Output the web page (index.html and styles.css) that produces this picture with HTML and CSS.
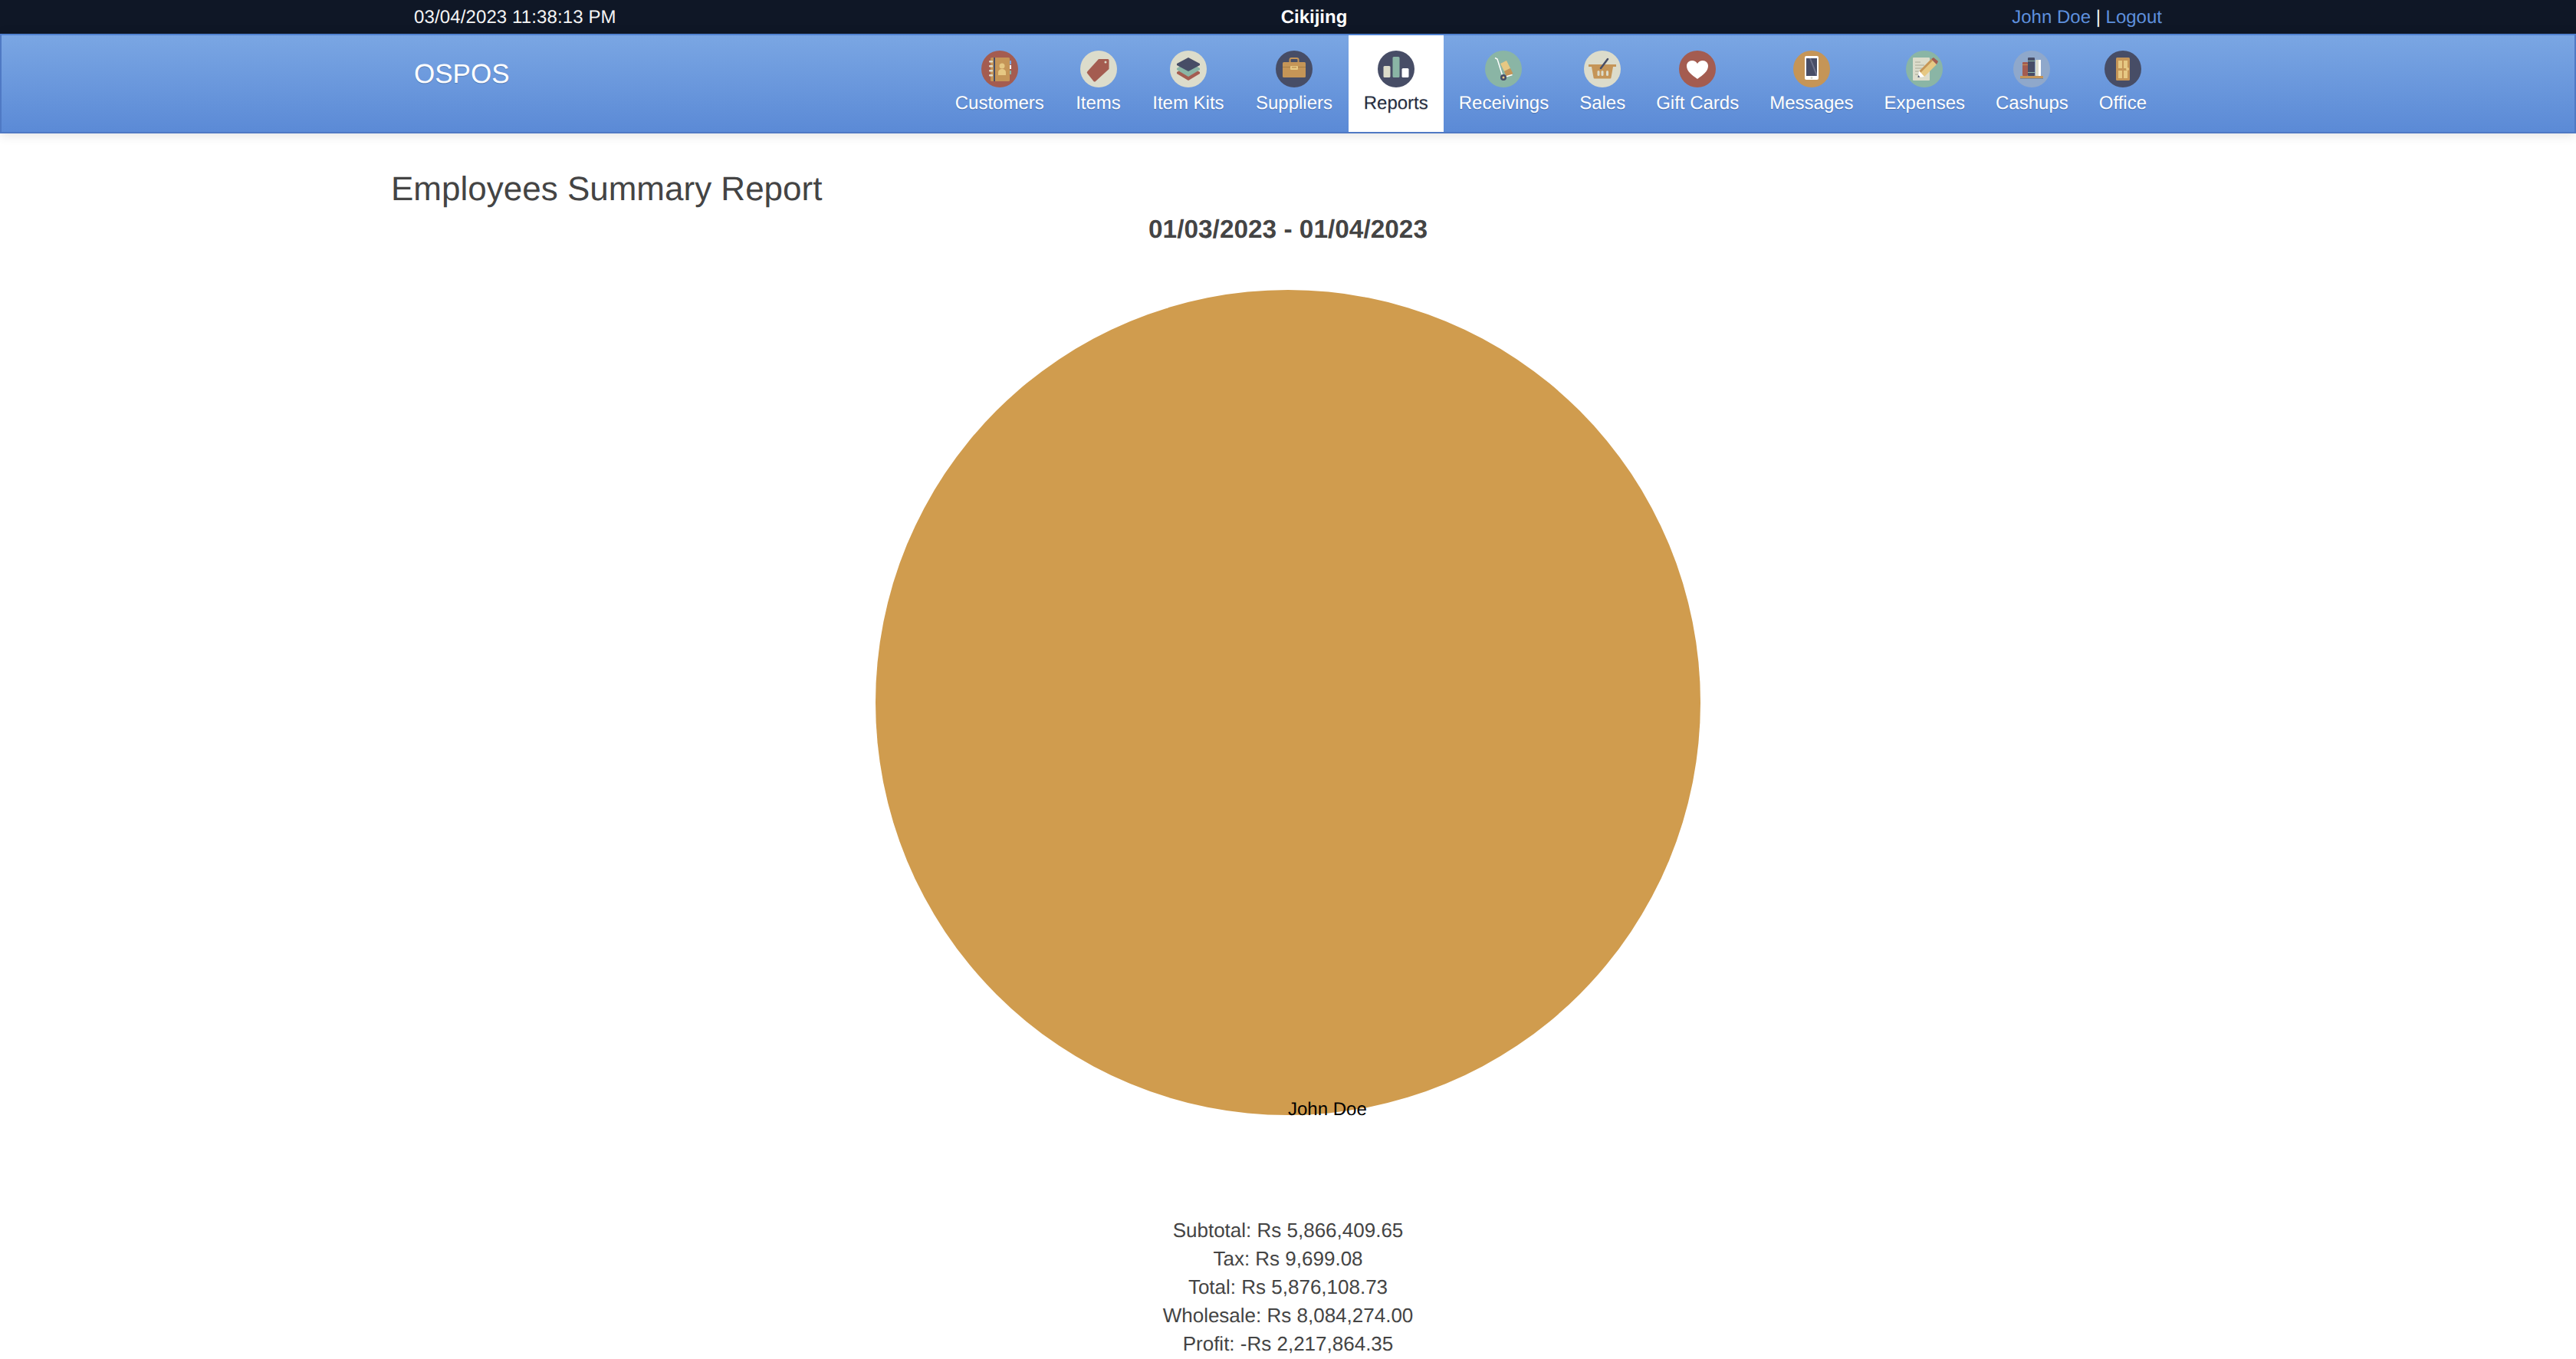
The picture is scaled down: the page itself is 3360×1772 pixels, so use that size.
FILE: index.html
```html
<!DOCTYPE html>
<html lang="en">
<head>
    <meta charset="UTF-8">
    <title>OSPOS - Employees Summary Report</title>
    <link rel="stylesheet" href="styles.css">
</head>
<body>
    <div class="topbar">
        <div class="topbar-inner">
            <div class="clock">03/04/2023 11:38:13 PM</div>
            <div class="company">Cikijing</div>
            <div><a href="#">John Doe</a> | <a href="#">Logout</a></div>
        </div>
    </div>

    <div class="navbar">
        <div class="navbar-inner">
            <a class="brand" href="#">OSPOS</a>
            <nav class="menu">
                <a class="menu-item" href="#">
                    <svg class="icon" viewBox="0 0 48 48">
                        <circle cx="24" cy="24" r="24" fill="#a45c50"/>
                        <rect x="12" y="9" width="25" height="31" rx="1.5" fill="#c59557"/>
                        <rect x="16" y="9" width="2" height="31" fill="#474d66"/>
                        <rect x="10" y="13" width="5" height="2.5" rx="1" fill="#dcdccb"/>
                        <rect x="10" y="19" width="5" height="2.5" rx="1" fill="#dcdccb"/>
                        <rect x="10" y="25" width="5" height="2.5" rx="1" fill="#dcdccb"/>
                        <rect x="10" y="31" width="5" height="2.5" rx="1" fill="#dcdccb"/>
                        <rect x="37" y="13" width="2" height="5" fill="#7aa6e3"/>
                        <rect x="37" y="19" width="2" height="5" fill="#ffffff"/>
                        <rect x="37" y="26" width="2" height="5" fill="#8ab5a5"/>
                        <circle cx="27" cy="20" r="3.5" fill="#e6c883"/>
                        <path d="M22 32v-3.5c0-3 2-4.5 5-4.5s5 1.500 5 4.500V32z" fill="#e6c883"/>
                    </svg>
                    <span>Customers</span>
                </a>
                <a class="menu-item" href="#">
                    <svg class="icon" viewBox="0 0 48 48">
                        <circle cx="24" cy="24" r="24" fill="#dcdccb"/>
                        <path d="M24 11h12a1.500 1.500 0 0 1 1.500 1.500V24L20 40a2 2 0 0 1-2.500 0L9.500 30a2 2 0 0 1 0-3z" fill="#a45c50"/>
                        <circle cx="33" cy="15" r="1.500" fill="#dcdccb"/>
                    </svg>
                    <span>Items</span>
                </a>
                <a class="menu-item" href="#">
                    <svg class="icon" viewBox="0 0 48 48">
                        <circle cx="24" cy="24" r="24" fill="#dcdccb"/>
                        <path d="M24 19l15 9v2l-15 9-15-9v-2z" fill="#a45c50"/>
                        <path d="M24 14l15 9v2l-15 9-15-9v-2z" fill="#8ab5a5"/>
                        <path d="M24 9l15 8v2l-15 8-15-8v-2z" fill="#474d66"/>
                    </svg>
                    <span>Item Kits</span>
                </a>
                <a class="menu-item" href="#">
                    <svg class="icon" viewBox="0 0 48 48">
                        <circle cx="24" cy="24" r="24" fill="#474d66"/>
                        <path d="M18.500 15v-3a2 2 0 0 1 2-2h7a2 2 0 0 1 2 2v3" fill="none" stroke="#c59557" stroke-width="2"/>
                        <rect x="9" y="15" width="30" height="20" rx="1.500" fill="#c59557"/>
                        <rect x="9" y="21" width="30" height="1" fill="#a67c45"/>
                        <rect x="19" y="20" width="10" height="5" rx="1" fill="#e6c883"/>
                        <rect x="21" y="21" width="6" height="1.500" fill="#c59557"/>
                    </svg>
                    <span>Suppliers</span>
                </a>
                <a class="menu-item active" href="#">
                    <svg class="icon" viewBox="0 0 48 48">
                        <circle cx="24" cy="24" r="24" fill="#474d66"/>
                        <rect x="7.500" y="20" width="9" height="15" rx="1.500" fill="#dcdccb"/>
                        <rect x="19.500" y="8" width="9" height="27" rx="1.500" fill="#8ab5a5"/>
                        <rect x="31.500" y="23" width="9" height="12" rx="1.500" fill="#ffffff"/>
                    </svg>
                    <span>Reports</span>
                </a>
                <a class="menu-item" href="#">
                    <svg class="icon" viewBox="0 0 48 48">
                        <circle cx="24" cy="24" r="24" fill="#8ab5a5"/>
                        <path d="M20 17l8-4 5 10-8 4z" fill="#e6c883"/>
                        <path d="M25 27l8-4 3.500 7-8.500 4z" fill="#c59557"/>
                        <path d="M13 9.500l3 1.500 7.500 24 12-3.500" fill="none" stroke="#ffffff" stroke-width="1.500"/>
                        <circle cx="24" cy="35" r="4" fill="#474d66"/>
                        <circle cx="24" cy="35" r="1.500" fill="#e6c883"/>
                    </svg>
                    <span>Receivings</span>
                </a>
                <a class="menu-item" href="#">
                    <svg class="icon" viewBox="0 0 48 48">
                        <circle cx="24" cy="24" r="24" fill="#dcdccb"/>
                        <path d="M10 21h28l-2.500 14a1.500 1.500 0 0 1-1.500 1.500H14a1.500 1.500 0 0 1-1.500-1.500z" fill="#c59557"/>
                        <rect x="6" y="18" width="36" height="3" fill="#c59557"/>
                        <path d="M22 23l9-12" fill="none" stroke="#474d66" stroke-width="2.500" stroke-linecap="round"/>
                        <rect x="17.500" y="26" width="3" height="7" rx="1.500" fill="#dcdccb"/>
                        <rect x="22.500" y="26" width="3" height="7" rx="1.500" fill="#dcdccb"/>
                        <rect x="29" y="26" width="3" height="7" rx="1.500" fill="#dcdccb"/>
                    </svg>
                    <span>Sales</span>
                </a>
                <a class="menu-item" href="#">
                    <svg class="icon" viewBox="0 0 48 48">
                        <circle cx="24" cy="24" r="24" fill="#a45c50"/>
                        <path d="M24 37C17 32 10 27 10 20c0-4 3-7 7-7 3 0 5.500 1.500 7 4 1.500-2.500 4-4 7-4 4 0 7 3 7 7 0 7-7 12-14 17z" fill="#ffffff"/>
                    </svg>
                    <span>Gift Cards</span>
                </a>
                <a class="menu-item" href="#">
                    <svg class="icon" viewBox="0 0 48 48">
                        <circle cx="24" cy="24" r="24" fill="#c59557"/>
                        <rect x="15" y="7" width="18" height="31" rx="2" fill="#ffffff"/>
                        <rect x="17" y="10" width="14" height="23" fill="#474d66"/>
                        <path d="M17 10h6l8 20v3h-1L21 10z" fill="#6b7088"/>
                        <circle cx="24" cy="35.500" r="1.500" fill="#dcdccb"/>
                    </svg>
                    <span>Messages</span>
                </a>
                <a class="menu-item" href="#">
                    <svg class="icon" viewBox="0 0 48 48">
                        <circle cx="24" cy="24" r="24" fill="#8ab5a5"/>
                        <rect x="9" y="9" width="22" height="30" rx="1" fill="#dcdccb"/>
                        <path d="M12 15h7M12 19h12M12 23h10M12 27h6M12 31h4" stroke="#a8a896" stroke-width="1"/>
                        <path d="M17 27L33 11l7 7-16 16z" fill="#e6c883"/>
                        <path d="M17 27L33 11l2 2L19 29z" fill="#c59557"/>
                        <path d="M33 11l3-2 6 5-2 4z" fill="#a45c50"/>
                        <path d="M17 26l-1 9 8-1z" fill="#ffffff"/>
                        <path d="M16 32l-.5 3 3-.5z" fill="#474d66"/>
                    </svg>
                    <span>Expenses</span>
                </a>
                <a class="menu-item" href="#">
                    <svg class="icon" viewBox="0 0 48 48">
                        <circle cx="24" cy="24" r="24" fill="#8fa8cb"/>
                        <rect x="12" y="15" width="7" height="18" rx="1" fill="#a45c50"/>
                        <rect x="12" y="18" width="7" height="1" fill="#c59557"/>
                        <rect x="19" y="9" width="9" height="24" rx="1" fill="#474d66"/>
                        <rect x="19" y="13" width="9" height="1" fill="#8ab5a5"/>
                        <rect x="19" y="28" width="9" height="1" fill="#8ab5a5"/>
                        <rect x="29" y="12" width="7" height="21" rx="1" fill="#dcdccb"/>
                        <rect x="33" y="12" width="3" height="21" fill="#ffffff"/>
                        <rect x="9" y="33" width="30" height="3" fill="#c59557"/>
                        <rect x="9" y="36" width="30" height="1" fill="#76889f"/>
                    </svg>
                    <span>Cashups</span>
                </a>
                <a class="menu-item" href="#">
                    <svg class="icon" viewBox="0 0 48 48">
                        <circle cx="24" cy="24" r="24" fill="#474d66"/>
                        <rect x="15" y="9" width="18" height="30" rx="1.500" fill="#c59557"/>
                        <rect x="18" y="13" width="5" height="10" fill="#e6c883"/>
                        <rect x="25" y="13" width="5" height="10" fill="#e6c883"/>
                        <rect x="18" y="26" width="5" height="10" fill="#e6c883"/>
                        <rect x="25" y="26" width="5" height="10" fill="#e6c883"/>
                        <circle cx="30" cy="24" r="2" fill="#e6c883"/>
                    </svg>
                    <span>Office</span>
                </a>
            </nav>
        </div>
    </div>

    <div class="wrapper">
        <h3 class="report-title">Employees Summary Report</h3>
        <h4 class="report-date">01/03/2023 - 01/04/2023</h4>

        <div class="chart">
            <svg class="pie" viewBox="0 0 1076 1076">
                <circle cx="538" cy="538" r="538" fill="#d09c4e"/>
            </svg>
            <span class="pie-label">John Doe</span>
        </div>

        <div class="summary">
            <div>Subtotal: Rs 5,866,409.65</div>
            <div>Tax: Rs 9,699.08</div>
            <div>Total: Rs 5,876,108.73</div>
            <div>Wholesale: Rs 8,084,274.00</div>
            <div>Profit: -Rs 2,217,864.35</div>
        </div>
    </div>
</body>
</html>
```

FILE: styles.css
```css
* {
    box-sizing: border-box;
}

body {
    margin: 0;
    background-color: #fff;
    color: #444;
    font-family: "Liberation Sans", Arial, sans-serif;
    font-size: 26px;
    line-height: 37px;
    text-rendering: geometricPrecision;
}

a {
    text-decoration: none;
}

.topbar {
    height: 44px;
    background-color: #0f1726;
    color: #f5f5f5;
    font-size: 24px;
    line-height: 46px;
}

.topbar-inner {
    display: flex;
    justify-content: space-between;
    width: 2280px;
    margin: 0 auto;
}

.topbar a {
    color: #5e90dd;
}

.clock {
    letter-spacing: 0.12px;
}

.company {
    font-weight: bold;
    color: #fff;
}

.navbar {
    height: 130px;
    border: 2px solid #4f79c4;
    border-top-color: #5081d0;
    background: linear-gradient(to bottom, #7aa6e3, #5b8ad6);
    box-shadow: 0 2px 14px rgba(0,0,0,0.12);
}

.navbar-inner {
    display: flex;
    justify-content: space-between;
    width: 2280px;
    height: 100%;
    margin: 0 auto;
}

.brand {
    margin-top: 31px;
    color: #fff;
    font-size: 35px;
    line-height: 40px;
    text-shadow: 0 1px 1px rgba(0,0,0,0.2);
}

.menu {
    display: flex;
}

.menu-item {
    display: flex;
    flex-direction: column;
    align-items: center;
    padding: 20px 20px 0;
    color: #fff;
    font-size: 24px;
    line-height: 30px;
    text-shadow: 0 1px 1px rgba(0,0,0,0.2);
}

.menu-item:nth-child(-n+4) {
    padding-left: 20.7px;
    padding-right: 20.7px;
}

.menu-item.active {
    background-color: #fff;
    color: #262d3f;
}

.icon {
    display: block;
    width: 48px;
    height: 48px;
    margin-bottom: 6px;
}

.wrapper {
    width: 2340px;
    margin: 0 auto;
}

.report-title {
    margin: 46px 0 0;
    font-size: 44px;
    font-weight: normal;
    line-height: 54px;
}

.report-date {
    margin: 6px 0 0;
    font-size: 33.400px;
    font-weight: bold;
    line-height: 40px;
    text-align: center;
}

.chart {
    position: relative;
    width: 1076px;
    height: 1076px;
    margin: 58px auto 0;
}

.pie {
    display: block;
    width: 100%;
    height: 100%;
}

.pie-label {
    position: absolute;
    left: 538px;
    top: 1055px;
    color: #000;
    font-size: 24px;
    line-height: 28px;
    white-space: nowrap;
}

.summary {
    margin-top: 132px;
    text-align: center;
}
```
